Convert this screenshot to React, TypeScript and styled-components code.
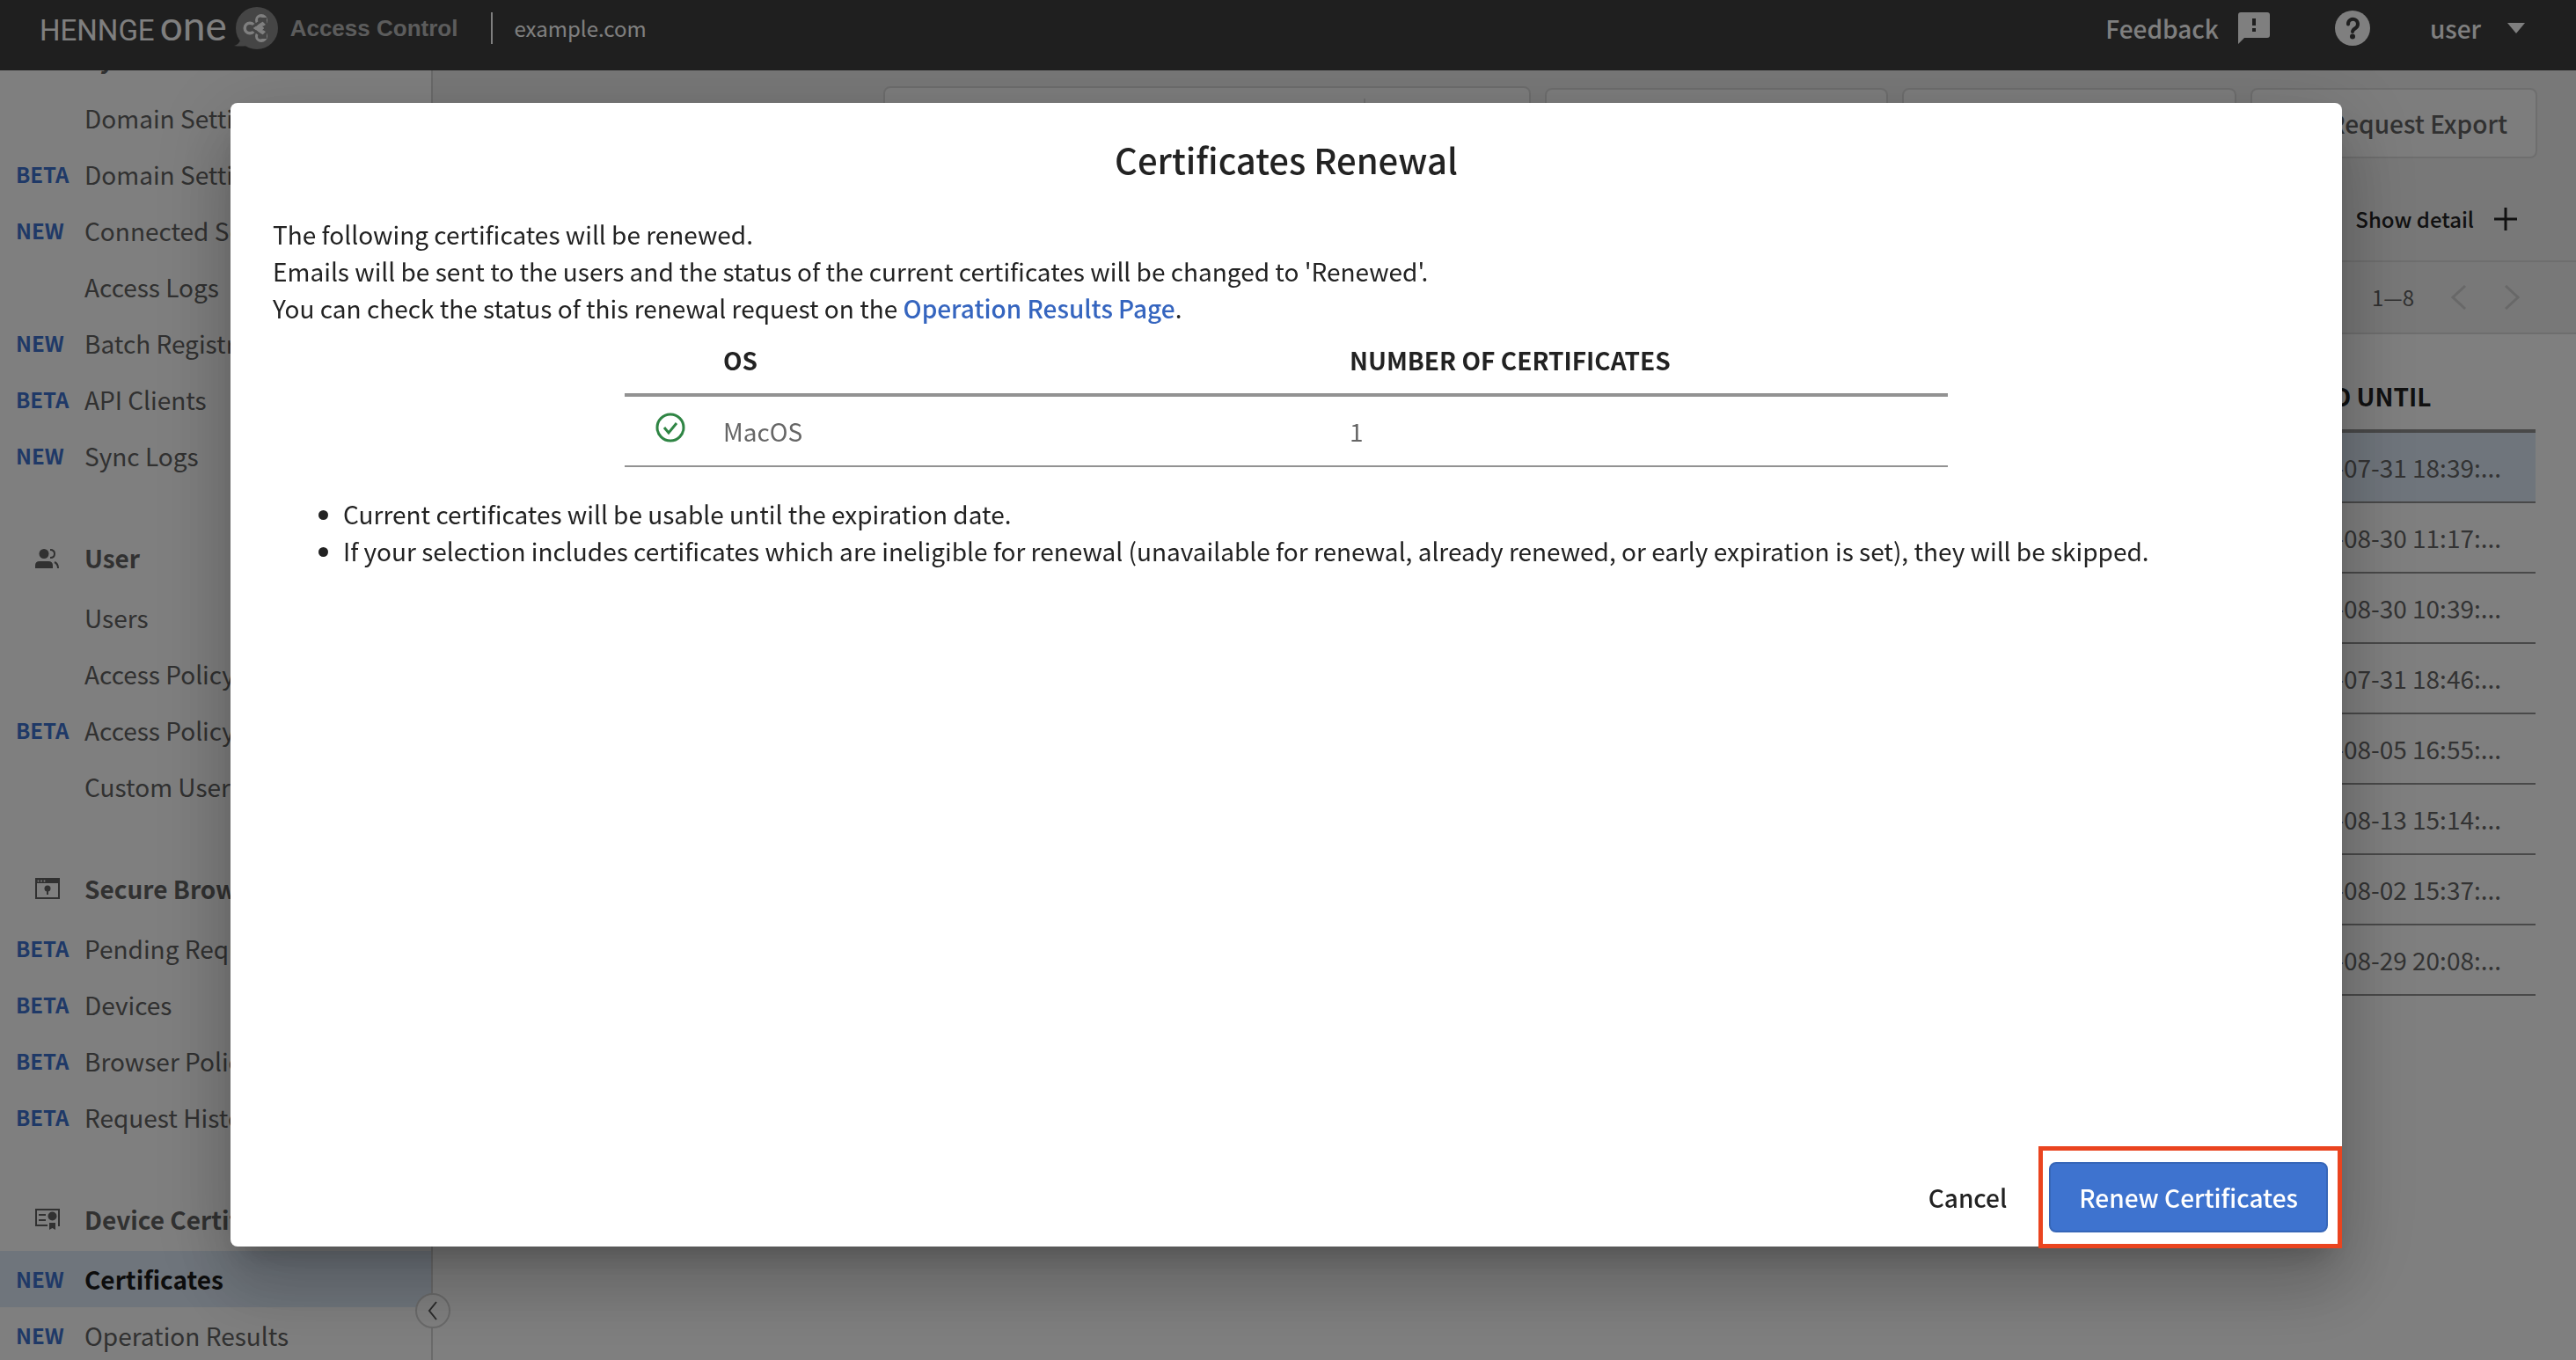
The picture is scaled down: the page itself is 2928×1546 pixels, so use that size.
import React from "react";
import styled, { createGlobalStyle } from "styled-components";

const Global = createGlobalStyle`
  *, *::before, *::after { box-sizing: border-box; }
  html, body { margin: 0; height: 100%; overflow: hidden; }
  body, button {
    font-family: "Noto Sans CJK JP", "Noto Sans", sans-serif;
    font-size: 28px;
    line-height: 42px;
  }
  body { color: #222; background: #fff; }
  button { margin: 0; padding: 0; border: 0; background: none; color: inherit; cursor: pointer; }
  a { color: inherit; text-decoration: none; }
`;

const Page = styled.div`
  display: flex;
  flex-direction: column;
  height: 100vh;
`;

/* ---------- top bar ---------- */

const TopBar = styled.header`
  display: flex;
  align-items: center;
  flex: none;
  height: 80px;
  padding: 0 58px 16px 45px;
  background: #3f3f3f;
  color: #fff;
  z-index: 1;
`;

const Brand = styled.div`
  display: flex;
  align-items: center;
`;

const BrandName = styled.span`
  font-family: Roboto, sans-serif;
  font-size: 33px;
  line-height: 56px;
`;

const BrandOne = styled.span`
  margin: 0 8px 0 6px;
  font-family: Lato, sans-serif;
  font-size: 46px;
  line-height: 56px;
`;

const BrandWords = styled.div`
  display: flex;
  align-items: baseline;
`;

const Product = styled.span`
  margin-left: 14px;
  color: #b8b8b8;
  font-family: "Liberation Sans", sans-serif;
  font-size: 26px;
  font-weight: 700;
`;

const Tenant = styled.span`
  margin-left: 38px;
  padding-left: 24px;
  border-left: 2px solid #fff;
  line-height: 36px;
  font-size: 24px;
`;

const BarActions = styled.div`
  display: flex;
  align-items: center;
  margin-left: auto;
  font-weight: 500;
`;

const BarButton = styled.button<{ $gap?: number; $before?: number }>`
  display: flex;
  align-items: center;
  gap: ${(p) => p.$gap ?? 0}px;
  margin-left: ${(p) => p.$before ?? 0}px;
  font-weight: 500;
`;

/* ---------- side navigation ---------- */

const Columns = styled.div`
  display: flex;
  flex: 1;
  min-height: 0;
`;

const Side = styled.aside`
  position: relative;
  flex: none;
  width: 492px;
  border-right: 2px solid #d4d4d4;
  background: #fff;
`;

const SideScroll = styled.nav`
  height: 100%;
  overflow: hidden;
`;

const Group = styled.section`
  margin-bottom: 48px;
  &:first-child { margin-top: -50px; }
`;

const GroupTitle = styled.h2`
  display: grid;
  grid-template-columns: 56px 1fr;
  align-items: center;
  height: 72px;
  margin: 0;
  padding-left: 40px;
  color: #626262;
  font-size: 28px;
  font-weight: 700;
`;

const Item = styled.a<{ $active?: boolean }>`
  display: grid;
  grid-template-columns: 78px 1fr;
  align-items: center;
  height: 64px;
  padding-left: 18px;
  overflow: hidden;
  white-space: nowrap;
  color: ${(p) => (p.$active ? "#1a1a1a" : "#626262")};
  background: ${(p) => (p.$active ? "#dfebf9" : "transparent")};
  font-weight: ${(p) => (p.$active ? 700 : 400)};
`;

const Tag = styled.span`
  color: #3e73cf;
  font-size: 24px;
  line-height: 40px;
  font-weight: 700;
`;

const Collapse = styled.button`
  position: absolute;
  right: -22px;
  bottom: 36px;
  display: grid;
  place-items: center;
  width: 40px;
  height: 40px;
  border: 2px solid #d4d4d4;
  border-radius: 50%;
  background: #fff;
  color: #555;
`;

/* ---------- certificates page ---------- */

const Main = styled.main`
  display: flex;
  flex-direction: column;
  flex: 1;
  min-width: 0;
`;

const Tools = styled.div`
  flex: none;
  height: 218px;
  background: #f0f0f0;
  border-bottom: 2px solid #dcdcdc;
`;

const ToolRow = styled.div`
  display: flex;
  justify-content: flex-end;
  gap: 16px;
  padding: 20px 44px 0;
`;

const ToolBox = styled.button<{ $width: number }>`
  display: flex;
  align-items: center;
  justify-content: flex-end;
  width: ${(p) => p.$width}px;
  height: 80px;
  padding: 0 32px;
  border: 2px solid #dcdcdc;
  border-radius: 8px;
  background: #fafafa;
  color: #626262;
  font-weight: 500;
`;

const SearchBox = styled.div`
  display: flex;
  width: 736px;
  height: 82px;
  margin-top: -2px;
  padding: 12px 0;
  border: 2px solid #dcdcdc;
  border-radius: 8px;
  background: #fafafa;
`;

const SearchInput = styled.input`
  flex: 1;
  min-width: 0;
  padding: 0 24px;
  border: 0;
  border-right: 2px solid #dcdcdc;
  background: none;
  font: inherit;
`;

const SearchButton = styled.button`
  width: 186px;
`;

const DetailRow = styled.div`
  display: flex;
  justify-content: flex-end;
  padding: 48px 66px 0;
`;

const DetailButton = styled.button`
  display: flex;
  align-items: center;
  gap: 22px;
  font-size: 24px;
  font-weight: 500;
`;

const Pager = styled.div`
  display: flex;
  align-items: center;
  justify-content: flex-end;
  flex: none;
  height: 82px;
  padding: 0 64px;
  border-bottom: 2px solid #dcdcdc;
  background: #f0f0f0;
  color: #626262;
  font-size: 24px;
`;

const PagerButton = styled.button`
  display: flex;
  margin-left: 42px;
  color: #d0d0d0;
`;

const ListArea = styled.div`
  flex: 1;
  padding: 32px 46px;
  background: #fff;
`;

const Table = styled.table<{ $width?: string }>`
  width: ${(p) => p.$width ?? "100%"};
  margin: 0 auto;
  border-collapse: separate;
  border-spacing: 0;
  table-layout: fixed;
  text-align: left;
`;

const Th = styled.th<{ $width?: number }>`
  width: ${(p) => (p.$width ? `${p.$width}px` : "auto")};
  height: 80px;
  padding: 0 0 0 40px;
  border-bottom: 4px solid #929292;
  font-weight: 700;
`;

const Td = styled.td<{ $marked?: boolean }>`
  height: 80px;
  padding: 0 0 0 40px;
  border-bottom: 2px solid #929292;
  background: ${(p) => (p.$marked ? "#dfebf9" : "transparent")};
  color: #666;
  white-space: nowrap;
`;

/* ---------- dialog ---------- */

const Overlay = styled.div`
  position: fixed;
  inset: 0;
  z-index: 2;
  display: flex;
  padding: 117px 266px 129px 262px;
  background: rgba(0, 0, 0, 0.5);
`;

const Dialog = styled.section`
  display: flex;
  flex-direction: column;
  flex: 1;
  padding: 34px 48px 16px;
  border-radius: 8px;
  background: #fff;
  box-shadow:
    0 22px 30px -14px rgba(0, 0, 0, 0.2),
    0 48px 76px 6px rgba(0, 0, 0, 0.14),
    0 18px 92px 16px rgba(0, 0, 0, 0.12);
`;

const Title = styled.h1`
  margin: 0 0 34px;
  font-size: 40px;
  line-height: 60px;
  font-weight: 500;
  text-align: center;
`;

const Text = styled.p`
  margin: 0;
`;

const TextLink = styled.a`
  color: #3565bf;
  font-weight: 500;
`;

const IconCell = styled(Td)`
  padding: 0 0 8px 35px;
  line-height: 0;
`;

const Notes = styled.ul`
  margin: 32px 0 0;
  padding-left: 80px;
`;

const Footer = styled.footer`
  display: flex;
  align-items: center;
  justify-content: flex-end;
  gap: 14px;
  margin: auto -32px 0 0;
`;

const CancelButton = styled.button`
  height: 80px;
  padding: 0 34px;
  font-weight: 500;
`;

const Highlight = styled.div`
  position: relative;
  &::after {
    content: "";
    position: absolute;
    inset: -18px -16px -18px -12px;
    border: 5px solid #ea441f;
    pointer-events: none;
  }
`;

const PrimaryButton = styled.button`
  display: block;
  height: 80px;
  padding: 0 32px;
  border: 2px solid #3666b8;
  border-radius: 8px;
  background: #3e73cf;
  color: #fff;
  font-weight: 500;
`;

/* ---------- icons ---------- */

const ProductIcon = () => (
  <svg width="50" height="48" viewBox="0 0 50 48" aria-hidden="true">
    <circle cx="26" cy="24" r="24" fill="#8a8a8a" />
    <path d="M0 44q5-1 7-6l8 6q-8 1-15 0z" fill="#8a8a8a" />
    <g fill="none" stroke="#fff" strokeWidth="7">
      <circle cx="18" cy="24" r="4" />
      <circle cx="31" cy="15" r="3.500" />
      <circle cx="31" cy="33" r="3.500" />
    </g>
    <path d="M22 24l7-5 5 5-5 5z" fill="#fff" />
    <g fill="#8a8a8a">
      <circle cx="18" cy="24" r="4" />
      <circle cx="30" cy="14.500" r="3" />
      <circle cx="30" cy="33.500" r="3" />
      <path d="M28 12h9v9zM28 36h9v-9z" />
    </g>
    <path d="M19 24l13-9M19 24l13 9" stroke="#8a8a8a" strokeWidth="3" />
    <path d="M24 24l6-4 4 4-4 4z" fill="#fff" />
  </svg>
);

const FeedbackIcon = () => (
  <svg width="36" height="36" viewBox="0 0 36 36" aria-hidden="true">
    <path fillRule="evenodd" fill="#fff" d="M3 0h30a3 3 0 0 1 3 3v23a3 3 0 0 1-3 3H7l-7 7V3a3 3 0 0 1 3-3zm13 7v8h4V7zm0 11v4h4v-4z" />
  </svg>
);

const HelpIcon = () => (
  <svg width="40" height="40" viewBox="0 0 40 40" aria-hidden="true">
    <circle cx="20" cy="20" r="20" fill="#fff" />
    <path
      d="M15 15.500a5.500 5.500 0 1 1 9 4q-4 2.500-4 4.500"
      fill="none"
      stroke="#3f3f3f"
      strokeWidth="4"
      strokeLinecap="round"
    />
    <circle cx="20" cy="29.500" r="3" fill="#3f3f3f" />
  </svg>
);

const CaretIcon = () => (
  <svg width="20" height="12" viewBox="0 0 20 12" aria-hidden="true">
    <path d="M0 0h20L10 12z" fill="#fff" />
  </svg>
);

const UsersIcon = () => (
  <svg width="28" height="22" viewBox="0 0 28 22" fill="currentColor" aria-hidden="true">
    <circle cx="10" cy="5.500" r="5.500" />
    <path d="M0 22v-3q0-5 5-5h10q5 0 5 5v3z" />
    <path d="M17 1q5 0 5 4.500T17 10M22 15q4 2 4 7" fill="none" stroke="currentColor" strokeWidth="2" />
  </svg>
);

const BrowserIcon = () => (
  <svg width="28" height="24" viewBox="0 0 28 24" aria-hidden="true">
    <rect x="1" y="1" width="26" height="22" fill="none" stroke="currentColor" strokeWidth="2" />
    <rect width="28" height="6" fill="currentColor" />
    <g fill="#fff">
      <circle cx="3.500" cy="3.500" r="1" />
      <circle cx="7" cy="3.500" r="1" />
      <circle cx="10.500" cy="3.500" r="1" />
    </g>
    <circle cx="14" cy="12" r="3.500" fill="currentColor" />
    <path d="M13 13h2v6h-2z" fill="currentColor" />
  </svg>
);

const CertificateIcon = () => (
  <svg width="28" height="24" viewBox="0 0 28 24" aria-hidden="true">
    <path d="M14 19H1V1h26v19M4 7h8M4 13h8" fill="none" stroke="currentColor" strokeWidth="2" />
    <circle cx="19.500" cy="8.500" r="5" fill="currentColor" />
    <path d="M16 16h7v8l-3.500-2-3.500 2z" fill="currentColor" />
  </svg>
);

const Chevron = ({ dir, width, height, stroke }: { dir: "left" | "right"; width: number; height: number; stroke: number }) => (
  <svg width={width} height={height} viewBox={`0 0 ${width} ${height}`} aria-hidden="true">
    <polyline
      points={
        dir === "left"
          ? `${width - 2},1 2,${height / 2} ${width - 2},${height - 1}`
          : `2,1 ${width - 2},${height / 2} 2,${height - 1}`
      }
      fill="none"
      stroke="currentColor"
      strokeWidth={stroke}
    />
  </svg>
);

const PlusIcon = () => (
  <svg width="28" height="28" viewBox="0 0 28 28" aria-hidden="true">
    <path d="M14 1v26M1 14h26" stroke="#222" strokeWidth="3" />
  </svg>
);

const CheckIcon = () => (
  <svg width="34" height="34" viewBox="0 0 34 34" fill="none" stroke="#2f8544" strokeWidth="3" aria-label="Eligible" role="img">
    <circle cx="17" cy="17" r="15" />
    <path d="M10 17l5 6 9-11" />
  </svg>
);

/* ---------- data ---------- */

type NavItem = { label: string; tag?: string; active?: boolean };

const groups: { title: string; icon?: React.ReactNode; items: NavItem[] }[] = [
  {
    title: "System",
    items: [
      { label: "Domain Settings" },
      { label: "Domain Settings", tag: "BETA" },
      { label: "Connected Services", tag: "NEW" },
      { label: "Access Logs" },
      { label: "Batch Registration", tag: "NEW" },
      { label: "API Clients", tag: "BETA" },
      { label: "Sync Logs", tag: "NEW" },
    ],
  },
  {
    title: "User",
    icon: <UsersIcon />,
    items: [
      { label: "Users" },
      { label: "Access Policy" },
      { label: "Access Policy", tag: "BETA" },
      { label: "Custom User" },
    ],
  },
  {
    title: "Secure Browser",
    icon: <BrowserIcon />,
    items: [
      { label: "Pending Requests", tag: "BETA" },
      { label: "Devices", tag: "BETA" },
      { label: "Browser Policy", tag: "BETA" },
      { label: "Request History", tag: "BETA" },
    ],
  },
  {
    title: "Device Certificates",
    icon: <CertificateIcon />,
    items: [
      { label: "Certificates", tag: "NEW", active: true },
      { label: "Operation Results", tag: "NEW" },
    ],
  },
];

const dates = [
  "07-31 18:39:...",
  "08-30 11:17:...",
  "08-30 10:39:...",
  "07-31 18:46:...",
  "08-05 16:55:...",
  "08-13 15:14:...",
  "08-02 15:37:...",
  "08-29 20:08:...",
];

export default function App() {
  return (
    <>
      <Global />
      <Page>
        <TopBar>
          <Brand>
            <BrandWords>
              <BrandName>HENNGE</BrandName>
              <BrandOne>one</BrandOne>
            </BrandWords>
            <ProductIcon />
            <Product>Access Control</Product>
          </Brand>
          <Tenant>example.com</Tenant>
          <BarActions>
            <BarButton $gap={22}>
              Feedback
              <FeedbackIcon />
            </BarButton>
            <BarButton $before={74} aria-label="Help">
              <HelpIcon />
            </BarButton>
            <BarButton $before={68} $gap={30}>
              user
              <CaretIcon />
            </BarButton>
          </BarActions>
        </TopBar>
        <Columns>
          <Side>
            <SideScroll>
              {groups.map((g) => (
                <Group key={g.title}>
                  <GroupTitle>
                    <span>{g.icon}</span>
                    {g.title}
                  </GroupTitle>
                  {g.items.map((it, i) => (
                    <Item key={i} href="#" $active={it.active}>
                      <Tag>{it.tag}</Tag>
                      {it.label}
                    </Item>
                  ))}
                </Group>
              ))}
            </SideScroll>
            <Collapse aria-label="Collapse menu">
              <Chevron dir="left" width={12} height={22} stroke={2} />
            </Collapse>
          </Side>
          <Main>
            <Tools>
              <ToolRow>
                <SearchBox>
                  <SearchInput aria-label="Search" />
                  <SearchButton aria-label="Search" />
                </SearchBox>
                <ToolBox $width={390} aria-label="Filter" />
                <ToolBox $width={380} aria-label="Actions" />
                <ToolBox $width={326}>Request Export</ToolBox>
              </ToolRow>
              <DetailRow>
                <DetailButton>
                  Show detail
                  <PlusIcon />
                </DetailButton>
              </DetailRow>
            </Tools>
            <Pager>
              1—8
              <PagerButton aria-label="Previous page">
                <Chevron dir="left" width={18} height={28} stroke={3} />
              </PagerButton>
              <PagerButton aria-label="Next page">
                <Chevron dir="right" width={18} height={28} stroke={3} />
              </PagerButton>
            </Pager>
            <ListArea>
              <Table>
                <thead>
                  <tr>
                    <Th />
                    <Th $width={330}>VALID UNTIL</Th>
                  </tr>
                </thead>
                <tbody>
                  {dates.map((d, i) => (
                    <tr key={d}>
                      <Td $marked={i === 0} />
                      <Td $marked={i === 0}>2024-{d}</Td>
                    </tr>
                  ))}
                </tbody>
              </Table>
            </ListArea>
          </Main>
        </Columns>
      </Page>
      <Overlay>
        <Dialog role="dialog" aria-modal="true" aria-labelledby="dialog-title">
          <Title id="dialog-title">Certificates Renewal</Title>
          <Text>The following certificates will be renewed.</Text>
          <Text>
            Emails will be sent to the users and the status of the current certificates will be changed to 'Renewed'.
          </Text>
          <Text>
            You can check the status of this renewal request on the{" "}
            <TextLink href="#">Operation Results Page</TextLink>.
          </Text>
          <Table $width="1504px">
            <thead>
              <tr>
                <Th $width={72} />
                <Th $width={712}>OS</Th>
                <Th>NUMBER OF CERTIFICATES</Th>
              </tr>
            </thead>
            <tbody>
              <tr>
                <IconCell>
                  <CheckIcon />
                </IconCell>
                <Td>MacOS</Td>
                <Td>1</Td>
              </tr>
            </tbody>
          </Table>
          <Notes>
            <li>Current certificates will be usable until the expiration date.</li>
            <li>
              If your selection includes certificates which are ineligible for renewal (unavailable for renewal, already
              renewed, or early expiration is set), they will be skipped.
            </li>
          </Notes>
          <Footer>
            <CancelButton>Cancel</CancelButton>
            <Highlight>
              <PrimaryButton>Renew Certificates</PrimaryButton>
            </Highlight>
          </Footer>
        </Dialog>
      </Overlay>
    </>
  );
}
